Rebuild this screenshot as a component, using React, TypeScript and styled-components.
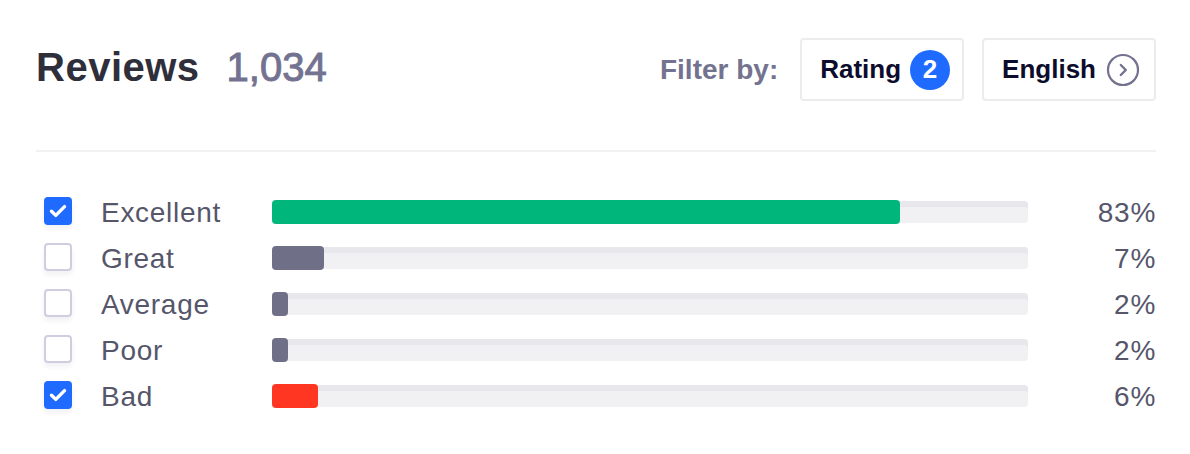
import React from "react";
import styled, { createGlobalStyle } from "styled-components";

const GlobalStyle = createGlobalStyle`
  html, body {
    margin: 0;
    padding: 0;
    background: #ffffff;
  }
  body {
    font-family: "Liberation Sans", Arial, sans-serif;
    -webkit-font-smoothing: antialiased;
  }
`;

const Panel = styled.section`
  width: 1190px;
  min-height: 454px;
  box-sizing: border-box;
  padding: 38px 34px 46px 36px;
`;

const Header = styled.header`
  display: flex;
  align-items: center;
  justify-content: space-between;
  height: 63px;
`;

const TitleGroup = styled.div`
  display: flex;
  align-items: baseline;
  gap: 27px;
  margin-top: -4px;
`;

const Title = styled.h2`
  margin: 0;
  font-size: 40px;
  font-weight: 700;
  letter-spacing: 0.5px;
  color: #2f2f3b;
`;

const Count = styled.span`
  font-size: 40px;
  font-weight: 400;
  color: #737391;
  -webkit-text-stroke: 1px #737391;
`;

const Filters = styled.div`
  display: flex;
  align-items: center;
`;

const FilterLabel = styled.span`
  font-size: 28px;
  font-weight: 700;
  color: #73738f;
  margin-right: 22px;
`;

const FilterButton = styled.button<{ $right: number }>`
  display: flex;
  align-items: center;
  height: 63px;
  padding: 0 ${(p) => p.$right}px 0 18px;
  margin-left: 18px;
  background: #ffffff;
  border: 2px solid #ececef;
  border-radius: 4px;
  font-family: inherit;
  font-size: 26px;
  font-weight: 700;
  color: #0c0c2c;
  cursor: pointer;

  &:first-of-type {
    margin-left: 0;
  }
`;

const Badge = styled.span`
  display: inline-flex;
  align-items: center;
  justify-content: center;
  width: 40px;
  height: 40px;
  margin-left: 9px;
  border-radius: 50%;
  background: #1f6bff;
  color: #ffffff;
  font-size: 26px;
  font-weight: 700;
`;

const IconWrap = styled.span`
  display: inline-flex;
  margin-left: 10px;
`;

const Divider = styled.hr`
  margin: 49px 0 0;
  border: none;
  height: 2px;
  background: #f1f1f3;
`;

const Distribution = styled.ul`
  list-style: none;
  margin: 41px 0 0;
  padding: 0 0 0 8px;
  display: flex;
  flex-direction: column;
  gap: 18px;
`;

const Row = styled.li`
  display: grid;
  grid-template-columns: 57px 171px 756px 1fr;
  align-items: center;
  height: 28px;
`;

const Box = styled.span<{ $checked: boolean }>`
  display: inline-flex;
  align-items: center;
  justify-content: center;
  box-sizing: border-box;
  width: 28px;
  height: 28px;
  border-radius: 4px;
  background: ${(p) => (p.$checked ? "#1f6bff" : "#ffffff")};
  border: ${(p) => (p.$checked ? "none" : "2px solid #cfcde0")};
  box-shadow: 0 4px 5px rgba(40, 40, 80, 0.06);
`;

const Label = styled.span`
  font-size: 28px;
  letter-spacing: 0.7px;
  color: #56566b;
  margin-top: 4px;
`;

const Track = styled.div`
  position: relative;
  height: 22px;
  margin-top: 2px;
  border-radius: 4px;
  background: #f1f1f4;
  box-shadow: inset 0 6px 0 #e7e7ec;
`;

const Fill = styled.div<{ $color: string }>`
  position: absolute;
  left: 0;
  top: -1px;
  height: 24px;
  border-radius: 4px;
  background: ${(p) => p.$color};
`;

const Percent = styled.span`
  text-align: right;
  font-size: 28px;
  letter-spacing: 0.7px;
  color: #56566b;
  margin-top: 4px;
`;

const CheckMark = () => (
  <svg width="18" height="14" viewBox="0 0 18 14" fill="none">
    <path
      d="M2.5 7.2l4.3 4.2L15.5 2.6"
      stroke="#ffffff"
      strokeWidth="3.4"
      strokeLinecap="round"
      strokeLinejoin="round"
    />
  </svg>
);

const ChevronCircle = () => (
  <svg width="34" height="34" viewBox="0 0 34 34" fill="none">
    <circle cx="17" cy="17" r="15" stroke="#72728e" strokeWidth="2.2" />
    <path
      d="M14.8 12l5 5-5 5"
      stroke="#72728e"
      strokeWidth="2.4"
      strokeLinecap="round"
      strokeLinejoin="round"
    />
  </svg>
);

type Rating = {
  label: string;
  percent: number;
  width: number;
  color: string;
  checked: boolean;
};

const ratings: Rating[] = [
  { label: "Excellent", percent: 83, width: 628, color: "#00b67a", checked: true },
  { label: "Great", percent: 7, width: 52, color: "#6f6f87", checked: false },
  { label: "Average", percent: 2, width: 16, color: "#6f6f87", checked: false },
  { label: "Poor", percent: 2, width: 16, color: "#6f6f87", checked: false },
  { label: "Bad", percent: 6, width: 46, color: "#ff3722", checked: true },
];

export default function App() {
  return (
    <>
      <GlobalStyle />
      <Panel>
        <Header>
          <TitleGroup>
            <Title>Reviews</Title>
            <Count>1,034</Count>
          </TitleGroup>
          <Filters>
            <FilterLabel>Filter by:</FilterLabel>
            <FilterButton $right={12}>
              Rating
              <Badge>2</Badge>
            </FilterButton>
            <FilterButton $right={14}>
              English
              <IconWrap>
                <ChevronCircle />
              </IconWrap>
            </FilterButton>
          </Filters>
        </Header>
        <Divider />
        <Distribution>
          {ratings.map((r) => (
            <Row key={r.label}>
              <Box $checked={r.checked}>{r.checked && <CheckMark />}</Box>
              <Label>{r.label}</Label>
              <Track>
                <Fill $color={r.color} style={{ width: r.width }} />
              </Track>
              <Percent>{r.percent}%</Percent>
            </Row>
          ))}
        </Distribution>
      </Panel>
    </>
  );
}
